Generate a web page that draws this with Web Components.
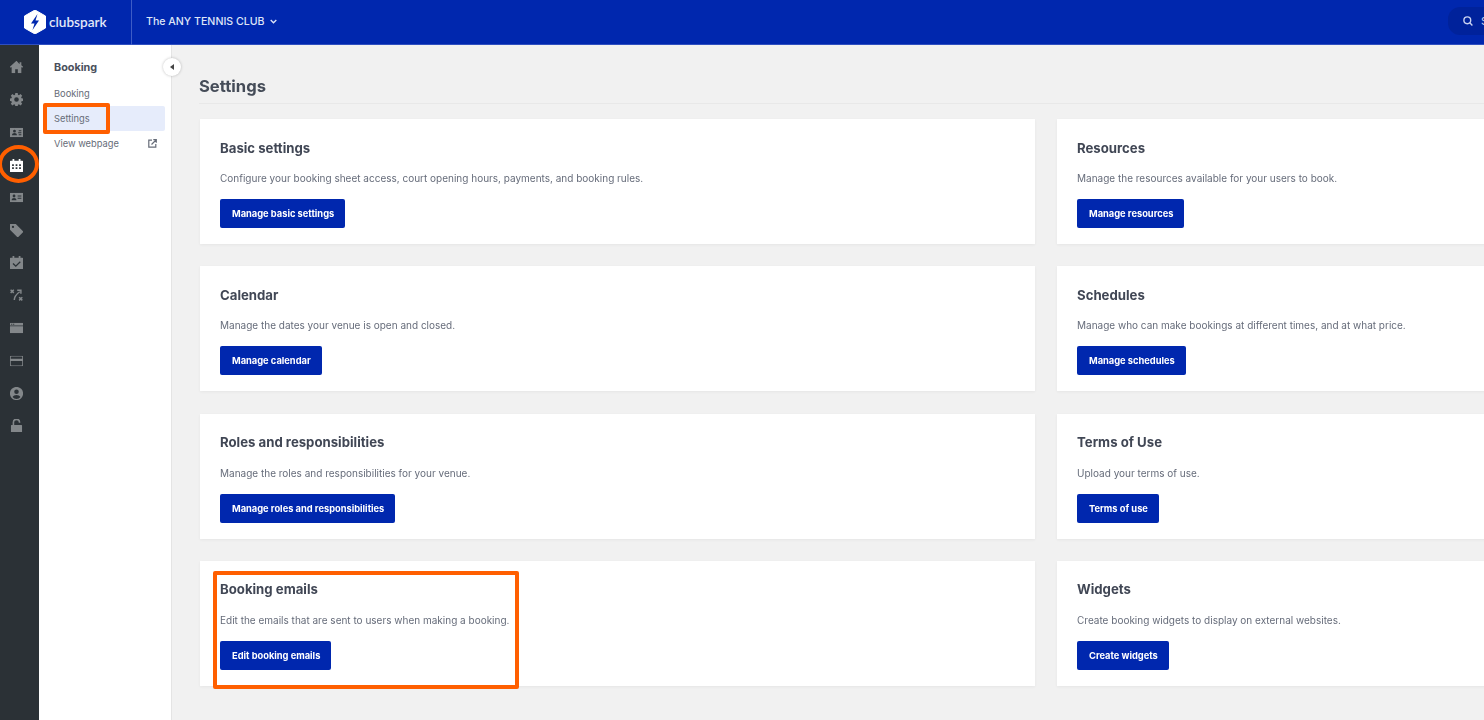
<!DOCTYPE html>
<html lang="en">
<head>
<meta charset="utf-8">
<title>Settings</title>
<style>
  html, body { margin: 0; height: 100%; }
  body { font-family: Inter, "Liberation Sans", sans-serif; overflow: hidden; background: #f1f1f1; }
</style>
</head>
<body>
<app-shell>
  <top-bar slot="top" club="The ANY TENNIS CLUB"></top-bar>

  <side-rail slot="rail">
    <rail-item><svg width="15" height="14" viewBox="0 0 15 14" fill="currentColor"><path d="M7.5 0 0 6.8l.9 1L2 6.9V14h4V9.5h3V14h4V6.9l1.1.9.9-1-2-1.8V1.5h-2v2.3z"/></svg></rail-item>
    <rail-item><svg width="15" height="15" viewBox="0 0 16 16" fill="currentColor"><path fill-rule="evenodd" d="M6.6 0h2.8l.4 2.2 1.2.5L12.9 1.400l2 2-1.300 1.900.5 1.200 2.200.4v2.800l-2.200.4-.5 1.200 1.300 1.900-2 2-1.900-1.300-1.200.5-.4 2.200H6.600l-.4-2.200-1.200-.5-1.900 1.300-2-2 1.300-1.900-.5-1.200L-.3 9.800V7l2.200-.4.5-1.200L1.100 3.400l2-2L5 2.700l1.200-.5zM8 5.200a2.800 2.800 0 1 0 0 5.600 2.800 2.800 0 0 0 0-5.600z"/></svg></rail-item>
    <rail-item><svg width="15" height="11" viewBox="0 0 15 11" fill="currentColor"><path fill-rule="evenodd" d="M1 0h13a1 1 0 0 1 1 1v9a1 1 0 0 1-1 1H1a1 1 0 0 1-1-1V1a1 1 0 0 1 1-1zm4.200 2.400a1.600 1.600 0 1 0 0 3.200 1.600 1.600 0 0 0 0-3.200zM2.400 8.600h5.600c0-1.500-1.200-2.400-2.800-2.400s-2.800.9-2.800 2.400zM10 3v1h3V3zm-.6 2.300v1h3.600v-1zm.6 2.300v1h3v-1z"/></svg></rail-item>
    <rail-item active><svg width="15" height="15" viewBox="0 0 15 15" fill="currentColor"><path fill-rule="evenodd" d="M3 0h2v2h5V0h2v2h2a1 1 0 0 1 1 1v11a1 1 0 0 1-1 1H1a1 1 0 0 1-1-1V3a1 1 0 0 1 1-1h2zM2.500 6v2h2V6zm4 0v2h2V6zm4 0v2h2V6zm-8 3.500v2h2v-2zm4 0v2h2v-2zm4 0v2h2v-2z"/></svg></rail-item>
    <rail-item><svg width="15" height="11" viewBox="0 0 15 11" fill="currentColor"><path fill-rule="evenodd" d="M1 0h13a1 1 0 0 1 1 1v9a1 1 0 0 1-1 1H1a1 1 0 0 1-1-1V1a1 1 0 0 1 1-1zm3.700 2.200a1.600 1.600 0 1 0 0 3.200 1.600 1.600 0 0 0 0-3.200zM2 8.700h5.400c0-1.500-1.100-2.500-2.700-2.500S2 7.200 2 8.700zM8.800 3.200v1.200H13V3.200zm0 2.500v1.200H13V5.700z"/></svg></rail-item>
    <rail-item><svg width="15" height="15" viewBox="0 0 15 15" fill="currentColor"><path fill-rule="evenodd" d="M1 0h5.600l8 8a1.300 1.300 0 0 1 0 1.800l-4.800 4.800a1.300 1.300 0 0 1-1.800 0l-8-8V1a1 1 0 0 1 1-1zm2.500 2.200a1.300 1.300 0 1 0 0 2.600 1.300 1.300 0 0 0 0-2.600z"/></svg></rail-item>
    <rail-item><svg width="15" height="15" viewBox="0 0 15 15" fill="currentColor"><path fill-rule="evenodd" d="M3 0h2v2h5V0h2v2h2a1 1 0 0 1 1 1v11a1 1 0 0 1-1 1H1a1 1 0 0 1-1-1V3a1 1 0 0 1 1-1h2zm8.300 6.100L6.700 10.500 4 8 3 9.100l3.700 3.500 5.600-5.400z"/></svg></rail-item>
    <rail-item><svg width="15" height="14" viewBox="0 0 15 14" fill="none" stroke="currentColor" stroke-width="1.700"><path d="M.8 1 4.400 4.600M4.400 1 .8 4.600M10.500 9.500l3.600 3.600M14.100 9.500l-3.600 3.600M5 12.800c0-3.500 2-6.500 6.200-9.500"/><path d="M8.300 1.500h4.200v4.200" fill="none"/></svg></rail-item>
    <rail-item><svg width="15" height="12" viewBox="0 0 15 12" fill="currentColor"><path fill-rule="evenodd" d="M1 0h13a1 1 0 0 1 1 1v10a1 1 0 0 1-1 1H1a1 1 0 0 1-1-1V1a1 1 0 0 1 1-1zm.500 1.200v1.200h1.200V1.200zm2.200 0v1.200h1.200V1.200zM0 3.300v.7h15v-.7z"/></svg></rail-item>
    <rail-item><svg width="15" height="12" viewBox="0 0 15 12" fill="currentColor"><path fill-rule="evenodd" d="M1.500 0h12A1.500 1.500 0 0 1 15 1.500v9a1.500 1.500 0 0 1-1.500 1.500h-12A1.500 1.500 0 0 1 0 10.500v-9A1.500 1.500 0 0 1 1.500 0zM1 2v1.500h13V2a1 1 0 0 0-1-1H2a1 1 0 0 0-1 1zm0 4v4a1 1 0 0 0 1 1h11a1 1 0 0 0 1-1V6z"/></svg></rail-item>
    <rail-item><svg width="15" height="15" viewBox="0 0 15 15" fill="currentColor"><path fill-rule="evenodd" d="M7.500 0a7.500 7.500 0 1 1 0 15 7.500 7.500 0 0 1 0-15zm0 3a2.600 2.600 0 1 0 0 5.200 2.600 2.600 0 0 0 0-5.200zM3 11.500a5.800 5.800 0 0 0 9 0c-.8-1.500-2.500-2.400-4.500-2.400S3.800 10 3 11.500z"/></svg></rail-item>
    <rail-item><svg width="13" height="15" viewBox="0 0 13 15" fill="currentColor"><path d="M1 7h11a1 1 0 0 1 1 1v6a1 1 0 0 1-1 1H1a1 1 0 0 1-1-1V8a1 1 0 0 1 1-1z"/><path d="M3 7.500V4a3.500 3.500 0 0 1 7 0v.5" fill="none" stroke="currentColor" stroke-width="1.800"/></svg></rail-item>
  </side-rail>

  <sub-nav slot="nav" heading="Booking">
    <nav-link>Booking</nav-link>
    <nav-link active>Settings</nav-link>
    <nav-link external>View webpage</nav-link>
  </sub-nav>

  <settings-page slot="main" heading="Settings">
    <settings-card><span slot="title">Basic settings</span><span slot="text">Configure your booking sheet access, court opening hours, payments, and booking rules.</span><span slot="action">Manage basic settings</span></settings-card>
    <settings-card><span slot="title">Resources</span><span slot="text">Manage the resources available for your users to book.</span><span slot="action">Manage resources</span></settings-card>
    <settings-card><span slot="title">Calendar</span><span slot="text">Manage the dates your venue is open and closed.</span><span slot="action">Manage calendar</span></settings-card>
    <settings-card><span slot="title">Schedules</span><span slot="text">Manage who can make bookings at different times, and at what price.</span><span slot="action">Manage schedules</span></settings-card>
    <settings-card><span slot="title">Roles and responsibilities</span><span slot="text">Manage the roles and responsibilities for your venue.</span><span slot="action">Manage roles and responsibilities</span></settings-card>
    <settings-card><span slot="title">Terms of Use</span><span slot="text">Upload your terms of use.</span><span slot="action">Terms of use</span></settings-card>
    <settings-card><span slot="title">Booking emails</span><span slot="text">Edit the emails that are sent to users when making a booking.</span><span slot="action">Edit booking emails</span></settings-card>
    <settings-card><span slot="title">Widgets</span><span slot="text">Create booking widgets to display on external websites.</span><span slot="action">Create widgets</span></settings-card>
  </settings-page>

  <!-- orange callouts drawn on top of the screenshot -->
  <call-out slot="marks" style="--x:43px;--y:103px;--w:67px;--h:31px"></call-out>
  <call-out slot="marks" round style="--x:-2px;--y:145px;--w:41px;--h:38px"></call-out>
  <call-out slot="marks" style="--x:213px;--y:571px;--w:306px;--h:118px"></call-out>
</app-shell>

<script>
  (function () {
    // small helper, every element is the same shape: template + open shadow root
    function define(name, html, extra) {
      const template = document.createElement("template");
      template.innerHTML = html;
      class El extends HTMLElement {
        constructor() {
          super();
          this.attachShadow({ mode: "open" });
          this.shadowRoot.appendChild(template.content.cloneNode(true));
        }
        connectedCallback() {
          if (extra) extra(this);
        }
      }
      customElements.define(name, El);
    }

    define("app-shell", `
      <style>
        /* the reference is a slightly soft, rescaled capture */
        :host { display: flex; flex-direction: column; position: relative; width: 100%; height: 720px; overflow: hidden; filter: blur(.35px); }
        .body { display: flex; flex: 1; min-height: 0; }
      </style>
      <slot name="top"></slot>
      <div class="body">
        <slot name="rail"></slot>
        <slot name="nav"></slot>
        <slot name="main"></slot>
      </div>
      <slot name="marks"></slot>
    `);

    define("top-bar", `
      <style>
        :host { display: flex; align-items: center; flex: none; height: 45px; background: #0027ae; color: #fff; box-sizing: border-box; border-bottom: 1px solid #2f4fc0; }
        .brand { display: flex; align-items: center; gap: 3px; width: 107px; padding-left: 24px; }
        .word { font: 600 13.600px Lato, "Liberation Sans", sans-serif; color: #e3e8f8; }
        .rule { width: 1px; height: 45px; background: #3d5cc6; }
        .club { display: flex; align-items: center; gap: 5px; margin: -2px 0 0 14px; font-size: 10.600px; font-weight: 500; color: #dfe5f7; }
        .search { display: flex; align-items: center; gap: 8px; margin-left: auto; width: 36px; height: 28px; margin-top: -2px; padding-left: 15px; box-sizing: border-box; overflow: hidden; background: #00229b; border-radius: 12px 0 0 12px; font-size: 11px; color: #c9d2f0; white-space: nowrap; }
        .search svg { flex: none; }
      </style>
      <div class="brand">
        <svg width="22" height="24" viewBox="0 0 22 24"><path d="M11 0 21.500 6v12L11 24 .5 18V6z" fill="#fff" stroke="#fff" stroke-linejoin="round"/><path d="M13.500 4 7 13.500h3.500L8.500 20l6.500-9.500h-3.500z" fill="#0027ae"/></svg>
        <span class="word">clubspark</span>
      </div>
      <div class="rule"></div>
      <div class="club"><span id="club"></span><svg width="7" height="5" viewBox="0 0 7 5" fill="none" stroke="#dfe5f7" stroke-width="1.300"><path d="M.7 1 3.500 3.800 6.300 1"/></svg></div>
      <div class="search"><svg width="10" height="10" viewBox="0 0 10 10" fill="none" stroke="#c9d2f0" stroke-width="1.400"><circle cx="4.300" cy="4.300" r="3.400"/><path d="m6.800 6.800 2.600 2.600"/></svg><span>Search</span></div>
    `, (el) => {
      el.shadowRoot.getElementById("club").textContent = el.getAttribute("club");
    });

    define("side-rail", `
      <style>
        :host { display: flex; flex-direction: column; flex: none; width: 39px; padding-top: 6px; box-sizing: border-box; background: #2b3136; }
      </style>
      <slot></slot>
    `);

    define("rail-item", `
      <style>
        :host { display: flex; align-items: center; justify-content: center; width: 32px; height: 32.600px; color: #83878a; }
        :host([active]) { color: #fff; }
        ::slotted(svg) { transform: scale(.88); }
      </style>
      <slot></slot>
    `);

    define("sub-nav", `
      <style>
        :host { display: block; flex: none; position: relative; width: 133px; box-sizing: border-box; padding: 14px 6px 0; background: #fff; border-right: 1px solid #e4e4e4; }
        h2 { margin: 0 0 4px; padding-left: 9px; font-size: 10.800px; line-height: 18px; font-weight: 700; color: #4a505c; }
        .toggle { position: absolute; top: 13px; right: -10px; display: flex; align-items: center; justify-content: center; width: 18px; height: 18px; border-radius: 50%; background: #fff; box-shadow: 0 0 3px rgba(0,0,0,.25); }
        .toggle i { border: 3px solid transparent; border-right: 4px solid #444; border-left: 0; }
      </style>
      <h2 id="h"></h2>
      <slot></slot>
      <div class="toggle"><i></i></div>
    `, (el) => {
      el.shadowRoot.getElementById("h").textContent = el.getAttribute("heading");
    });

    define("nav-link", `
      <style>
        :host { display: flex; align-items: center; justify-content: space-between; width: 120px; height: 25px; box-sizing: border-box; padding: 0 8px 0 9px; font-size: 9.300px; color: #666c78; border-radius: 2px; }
        :host([active]) { background: #e6ecfb; }
        svg { display: none; }
        :host([external]) svg { display: block; }
      </style>
      <span><slot></slot></span>
      <svg width="9" height="9" viewBox="0 0 9 9" fill="none" stroke="#666c78" stroke-width="1.200"><path d="M4 1.200H.8v7h7V5M3.500 5.500 8 1M5.300.7h3v3"/></svg>
    `);

    define("settings-page", `
      <style>
        :host { display: block; flex: 1; min-width: 0; overflow: hidden; padding: 29px 0 0 27px; }
        h1 { margin: 0 0 15px; padding-bottom: 5px; font-size: 16.600px; line-height: 24px; font-weight: 700; color: #454c58; border-bottom: 1px solid #e8e8e8; }
        .grid { display: grid; grid-template-columns: 835px 460px; grid-auto-rows: 125px; column-gap: 22px; row-gap: 22.330px; margin-left: 1px; }
      </style>
      <h1 id="h"></h1>
      <div class="grid"><slot></slot></div>
    `, (el) => {
      el.shadowRoot.getElementById("h").textContent = el.getAttribute("heading");
    });

    define("settings-card", `
      <style>
        :host { display: flex; flex-direction: column; align-items: flex-start; box-sizing: border-box; padding: 19.500px 20px 0; background: #fff; box-shadow: 0 1px 3px rgba(0,0,0,.05); }
        .title { font-size: 13.200px; line-height: 18px; font-weight: 700; color: #414755; }
        .text { margin-top: 13.500px; font-size: 10px; line-height: 16px; color: #666c7a; }
        .btn { display: flex; align-items: center; height: 29px; margin-top: 13px; padding: 0 11px 0 12px; box-sizing: border-box; background: #0027ae; border-radius: 2px; font-size: 9.300px; font-weight: 700; color: #fff; white-space: nowrap; }
      </style>
      <div class="title"><slot name="title"></slot></div>
      <div class="text"><slot name="text"></slot></div>
      <div class="btn"><slot name="action"></slot></div>
    `);

    define("call-out", `
      <style>
        :host { display: block; position: absolute; left: var(--x); top: var(--y); width: var(--w); height: var(--h); box-sizing: border-box; border: 4px solid #ff5f00; border-radius: 2px; pointer-events: none; }
        :host([round]) { border-radius: 50%; }
      </style>
    `);
  })();
</script>
</body>
</html>
